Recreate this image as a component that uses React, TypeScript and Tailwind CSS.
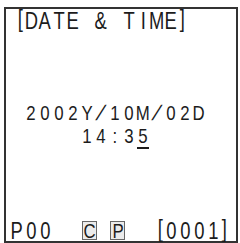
import React from 'react';

// 16-column character grid, 14px pitch, like the LCD of the device
type CellProps = { ch: string; under?: boolean; boxed?: boolean };

function Cell({ ch, under, boxed }: CellProps) {
  if (boxed) {
    return (
      <div className="w-[14px] shrink-0 flex">
        <div className="ml-[2px] w-[15px] h-[19px] border border-[#666] bg-[#ebebeb] flex justify-center">
          <span className="block text-[21px] leading-[17px] scale-x-[0.8]">{ch}</span>
        </div>
      </div>
    );
  }

  const align =
    ch === '[' ? 'items-end pr-[1px]' : ch === ']' ? 'items-start pl-[1px]' : 'items-center';
  const shape =
    ch === '/' ? '-skew-x-[20deg]' : ch === '[' || ch === ']' ? 'scale-x-[0.8] -translate-y-[2px]' : 'scale-x-[0.8]';

  return (
    <div className={`w-[14px] shrink-0 flex flex-col ${align}`}>
      <span className={`block whitespace-pre ${shape}`}>{ch}</span>
      {under && <span className="block w-[12px] h-[2px] bg-[#1c1c1c]" />}
    </div>
  );
}

function Line({
  text,
  className,
  under,
  boxed = [],
}: {
  text: string;
  className: string;
  under?: number;
  boxed?: number[];
}) {
  return (
    <div className={`flex items-start ${className}`}>
      {[...text].map((ch, i) => (
        <Cell key={i} ch={ch} under={i === under} boxed={boxed.includes(i)} />
      ))}
    </div>
  );
}

export default function App() {
  return (
    <div className="w-[240px] h-[243px] bg-white pt-[7px] pl-[4px] text-[#1c1c1c] [font-family:'Liberation_Sans',Arial,sans-serif]">
      <div className="w-[234px] h-[236px] border-2 border-[#333] flex flex-col pl-[4px]">
        {/* Title */}
        <Line text="[DATE & TIME]" className="mt-[1px] h-[22px] text-[23px] leading-[22px]" />

        {/* Date / time */}
        <Line text=" 2002Y/10M/02D" className="mt-[69px] h-[23px] text-[21px] leading-[23px]" />
        <Line text="     14:35" under={9} className="text-[21px] leading-[23px]" />

        {/* Status row */}
        <Line
          text="P00  C P  [0001]"
          boxed={[5, 7]}
          className="mt-auto h-[20px] text-[23px] leading-[20px]"
        />
      </div>
    </div>
  );
}
